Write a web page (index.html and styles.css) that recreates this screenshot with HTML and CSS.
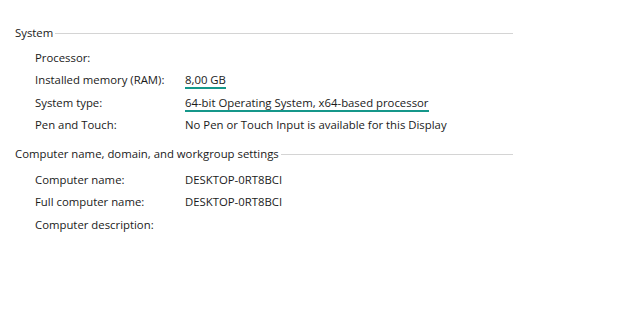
FILE: index.html
```html
<!DOCTYPE html>
<html>
<head>
<meta charset="utf-8">
<link rel="stylesheet" href="styles.css">
</head>
<body>
<div class="page">
  <section class="group">
    <div class="group-head"><span class="group-title">System</span><span class="rule"></span></div>
    <div class="rows">
      <div class="row"><span class="label">Processor:</span><span class="value"></span></div>
      <div class="row"><span class="label">Installed memory (RAM):</span><span class="value"><span class="mark">8,00 GB</span></span></div>
      <div class="row"><span class="label">System type:</span><span class="value"><span class="mark">64-bit Operating System, x64-based processor</span></span></div>
      <div class="row"><span class="label">Pen and Touch:</span><span class="value">No Pen or Touch Input is available for this Display</span></div>
    </div>
  </section>
  <section class="group second">
    <div class="group-head"><span class="group-title">Computer name, domain, and workgroup settings</span><span class="rule"></span></div>
    <div class="rows">
      <div class="row"><span class="label">Computer name:</span><span class="value">DESKTOP-0RT8BCI</span></div>
      <div class="row"><span class="label">Full computer name:</span><span class="value">DESKTOP-0RT8BCI</span></div>
      <div class="row"><span class="label">Computer description:</span><span class="value"></span></div>
    </div>
  </section>
</div>
</body>
</html>
```
FILE: styles.css
```css
html, body {
  margin: 0;
  padding: 0;
  background: #ffffff;
}
body {
  font-family: "Open Sans", "Noto Sans", sans-serif;
  font-size: 11.35px;
  color: #1a1a1a;
}
.page {
  width: 498px;
  padding: 24px 0 0 15px;
}
.group-head {
  display: flex;
  align-items: center;
  height: 17px;
}
.group-title {
  white-space: nowrap;
}
.rule {
  flex: 1;
  height: 0;
  border-top: 1px solid #d4d4d4;
  margin-left: 2px;
  margin-top: 1px;
}
.rows {
  padding-left: 20px;
  padding-top: 5px;
}
.second .rows {
  padding-top: 6px;
}
.row {
  display: flex;
  height: 22.5px;
  align-items: center;
}
.label {
  width: 150px;
  flex: none;
}
.value {
  white-space: nowrap;
}
.mark {
  border-bottom: 2px solid #15978a;
  padding-bottom: 0;
}
.second {
  margin-top: 9px;
}
```
